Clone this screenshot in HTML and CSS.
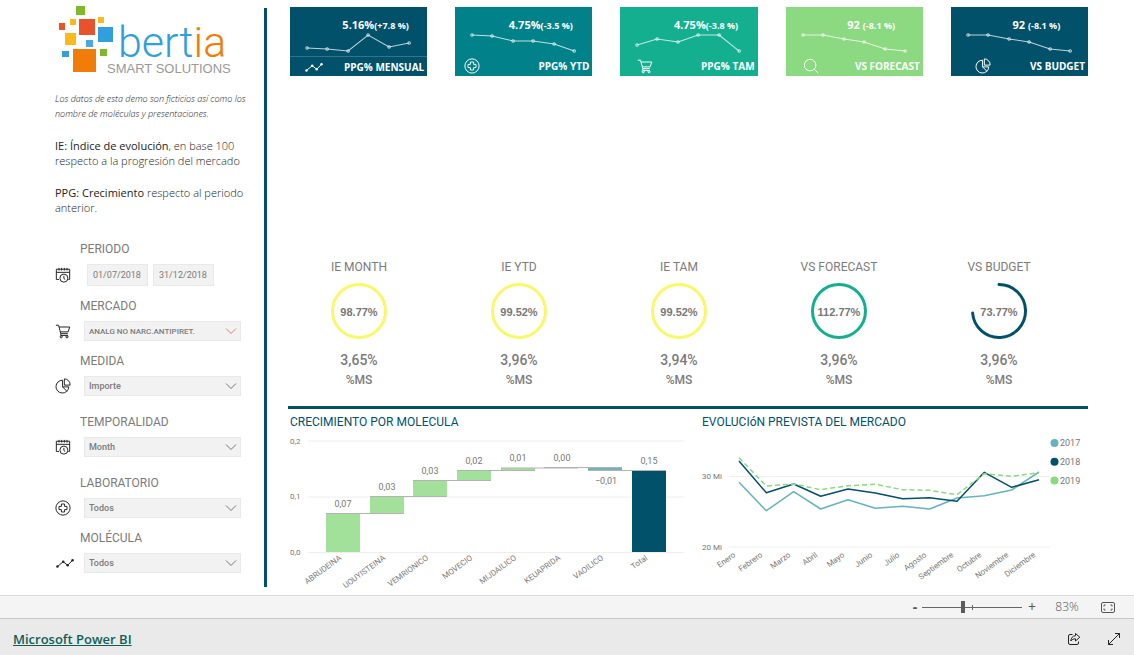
FILE: index.html
```html
<!DOCTYPE html>
<html lang="es">
<head>
<meta charset="utf-8">
<meta name="viewport" content="width=device-width, initial-scale=1">
<title>Bertia Smart Solutions</title>
<link rel="stylesheet" href="styles.css">
</head>
<body>
<svg class="sprite" aria-hidden="true">
  <symbol id="calendar" viewBox="0 0 18 18"><path d="M4.500 14H1.500V2.500h15V14H15M1.500 6h15M4.500 1v3M7.500 1v3M10.500 1v3M13.500 1v3"/><circle cx="10" cy="12.500" r="4.500"/><path d="M10 10v3l1.500 1"/></symbol>
  <symbol id="cart" viewBox="0 0 18 18"><path d="M1 2.500h3l2.500 9.500h8M4.600 4.500h12L14.800 10H6M6.500 12v2h8"/><circle cx="7" cy="15.500" r="1.200"/><circle cx="13.500" cy="15.500" r="1.200"/></symbol>
  <symbol id="pie" viewBox="0 0 18 18"><path d="M8.500 2.500A7.200 7.200 0 1 0 15.500 10H8.500z"/><path d="M10.500 1v7H17a6.500 6.500 0 0 0-6.500-7z"/><path d="M8.500 10l5 5"/></symbol>
  <symbol id="cross" viewBox="0 0 18 18"><circle cx="9" cy="9" r="8"/><path d="M7.200 4.500h3.600v2.700h2.700v3.600h-2.700v2.700H7.200v-2.700H4.500V7.200h2.700z"/></symbol>
  <symbol id="trend" viewBox="0 0 20 18"><path d="M1.500 13L8 7.500l5 4L18.500 6"/><g class="dots"><circle cx="1.500" cy="13" r="1.400"/><circle cx="8" cy="7.500" r="1.400"/><circle cx="13" cy="11.500" r="1.400"/><circle cx="18.500" cy="6" r="1.400"/></g></symbol>
  <symbol id="search" viewBox="0 0 18 18"><circle cx="8" cy="8" r="6.500"/><path d="M12.800 12.800l4.200 4.200"/></symbol>
  <symbol id="chevron" viewBox="0 0 12 8"><path d="M1 1.500l5 5 5-5"/></symbol>
</svg>

<main class="report">
  <aside class="sidebar">
    <svg class="logo" viewBox="0 0 185 72" role="img" aria-label="bertia smart solutions">
      <rect x="21" y="2" width="9" height="9" fill="#80b928"/>
      <rect x="4" y="19" width="6" height="7" fill="#e8532b"/>
      <rect x="15" y="15" width="6" height="6" fill="#fbb91b"/>
      <rect x="24" y="15" width="16" height="16" fill="#e8532b"/>
      <rect x="43" y="13" width="6" height="6" fill="#fbb91b"/>
      <rect x="43" y="23" width="15" height="15" fill="#309fdb"/>
      <rect x="10" y="29" width="11" height="12" fill="#fbb91b"/>
      <rect x="31" y="36" width="7" height="7" fill="#45a9e2"/>
      <rect x="7" y="47" width="7" height="6" fill="#309fdb"/>
      <rect x="45" y="45" width="7" height="7" fill="#80b928"/>
      <rect x="18" y="45" width="23" height="23" fill="#f07d0a"/>
      <text class="logo-name" x="63" y="53">bert<tspan fill="#f07d0a">ia</tspan></text>
      <text class="logo-tag" x="52" y="69">SMART SOLUTIONS</text>
    </svg>
    <p class="note">Los datos de esta demo son ficticios así como los nombre de moléculas y presentaciones.</p>
    <p class="about"><b>IE: Índice de evolución</b>, en base 100 respecto a la progresión del mercado</p>
    <p class="about"><b>PPG: Crecimiento</b> respecto al periodo anterior.</p>

    <form class="filters">
      <fieldset class="filter">
        <legend class="filter-name">PERIODO</legend>
        <div class="filter-row">
          <svg class="icon"><use href="#calendar"/></svg>
          <div class="dates">
            <input type="text" value="01/07/2018" aria-label="Desde">
            <input type="text" value="31/12/2018" aria-label="Hasta">
          </div>
        </div>
      </fieldset>
      <div class="filter">
        <label class="filter-name" for="mercado">MERCADO</label>
        <div class="filter-row">
          <svg class="icon"><use href="#cart"/></svg>
          <div class="drop drop-active"><select class="small" id="mercado"><option>ANALG NO NARC.ANTIPIRET.</option></select><svg class="chevron"><use href="#chevron"/></svg></div>
        </div>
      </div>
      <div class="filter">
        <label class="filter-name" for="medida">MEDIDA</label>
        <div class="filter-row">
          <svg class="icon"><use href="#pie"/></svg>
          <div class="drop"><select id="medida"><option>Importe</option></select><svg class="chevron"><use href="#chevron"/></svg></div>
        </div>
      </div>
      <div class="filter filter-apart">
        <label class="filter-name" for="temporalidad">TEMPORALIDAD</label>
        <div class="filter-row">
          <svg class="icon"><use href="#calendar"/></svg>
          <div class="drop"><select id="temporalidad"><option>Month</option></select><svg class="chevron"><use href="#chevron"/></svg></div>
        </div>
      </div>
      <div class="filter filter-apart">
        <label class="filter-name" for="laboratorio">LABORATORIO</label>
        <div class="filter-row">
          <svg class="icon"><use href="#cross"/></svg>
          <div class="drop"><select id="laboratorio"><option>Todos</option></select><svg class="chevron"><use href="#chevron"/></svg></div>
        </div>
      </div>
      <div class="filter">
        <label class="filter-name" for="molecula">MOLÉCULA</label>
        <div class="filter-row">
          <svg class="icon icon-wide"><use href="#trend"/></svg>
          <div class="drop"><select id="molecula"><option>Todos</option></select><svg class="chevron"><use href="#chevron"/></svg></div>
        </div>
      </div>
    </form>
  </aside>

  <div class="content">
    <section class="kpis">
      <article class="kpi navy">
        <p class="kpi-value">5.16%<small>(+7.8 %)</small></p>
        <svg class="spark" viewBox="0 0 137 22"><path d="M17 14L37 15 58 17 78 1 99 13 119 9"/><g><circle cx="17" cy="14" r="1.300"/><circle cx="37" cy="15" r="1.300"/><circle cx="58" cy="17" r="1.300"/><circle cx="78" cy="1" r="1.300"/><circle cx="99" cy="13" r="1.300"/><circle cx="119" cy="9" r="1.300"/></g></svg>
        <div class="kpi-foot ruled"><svg class="icon icon-wide"><use href="#trend"/></svg><h2>PPG% MENSUAL</h2></div>
      </article>
      <article class="kpi teal">
        <p class="kpi-value">4.75%<small>(-3.5 %)</small></p>
        <svg class="spark" viewBox="0 0 137 22"><path d="M17 1L37 2 58 7 78 7 99 10 119 17"/><g><circle cx="17" cy="1" r="1.300"/><circle cx="37" cy="2" r="1.300"/><circle cx="58" cy="7" r="1.300"/><circle cx="78" cy="7" r="1.300"/><circle cx="99" cy="10" r="1.300"/><circle cx="119" cy="17" r="1.300"/></g></svg>
        <div class="kpi-foot near"><svg class="icon"><use href="#cross"/></svg><h2>PPG% YTD</h2></div>
      </article>
      <article class="kpi green">
        <p class="kpi-value">4.75%<small>(-3.8 %)</small></p>
        <svg class="spark" viewBox="0 0 137 22"><path d="M17 11L37 5 58 8 78 1 99 1 119 17"/><g><circle cx="17" cy="11" r="1.300"/><circle cx="37" cy="5" r="1.300"/><circle cx="58" cy="8" r="1.300"/><circle cx="78" cy="1" r="1.300"/><circle cx="99" cy="1" r="1.300"/><circle cx="119" cy="17" r="1.300"/></g></svg>
        <div class="kpi-foot"><svg class="icon"><use href="#cart"/></svg><h2>PPG% TAM</h2></div>
      </article>
      <article class="kpi lime">
        <p class="kpi-value">92 <small>(-8.1 %)</small></p>
        <svg class="spark" viewBox="0 0 137 22"><path d="M17 1L37 1 58 5 78 8 99 15 119 17"/><g><circle cx="17" cy="1" r="1.300"/><circle cx="37" cy="1" r="1.300"/><circle cx="58" cy="5" r="1.300"/><circle cx="78" cy="8" r="1.300"/><circle cx="99" cy="15" r="1.300"/><circle cx="119" cy="17" r="1.300"/></g></svg>
        <div class="kpi-foot"><svg class="icon"><use href="#search"/></svg><h2>VS FORECAST</h2></div>
      </article>
      <article class="kpi navy">
        <p class="kpi-value">92 <small>(-8.1 %)</small></p>
        <svg class="spark" viewBox="0 0 137 22"><path d="M17 1L37 1 58 5 78 8 99 15 119 17"/><g><circle cx="17" cy="1" r="1.300"/><circle cx="37" cy="1" r="1.300"/><circle cx="58" cy="5" r="1.300"/><circle cx="78" cy="8" r="1.300"/><circle cx="99" cy="15" r="1.300"/><circle cx="119" cy="17" r="1.300"/></g></svg>
        <div class="kpi-foot far"><svg class="icon"><use href="#pie"/></svg><h2>VS BUDGET</h2></div>
      </article>
    </section>

    <section class="gauges">
      <article class="gauge"><h2>IE MONTH</h2><svg viewBox="0 0 56 56"><circle class="ring yellow" cx="28" cy="28" r="26.500"/><text x="28" y="33">98.77%</text></svg><p class="share">3,65%</p><p>%MS</p></article>
      <article class="gauge"><h2>IE YTD</h2><svg viewBox="0 0 56 56"><circle class="ring yellow" cx="28" cy="28" r="26.500"/><text x="28" y="33">99.52%</text></svg><p class="share">3,96%</p><p>%MS</p></article>
      <article class="gauge"><h2>IE TAM</h2><svg viewBox="0 0 56 56"><circle class="ring yellow" cx="28" cy="28" r="26.500"/><text x="28" y="33">99.52%</text></svg><p class="share">3,94%</p><p>%MS</p></article>
      <article class="gauge"><h2>VS FORECAST</h2><svg viewBox="0 0 56 56"><circle class="ring jade" cx="28" cy="28" r="26.500"/><text x="28" y="33">112.77%</text></svg><p class="share">3,96%</p><p>%MS</p></article>
      <article class="gauge"><h2>VS BUDGET</h2><svg viewBox="0 0 56 56"><path class="ring blue" d="M28 1.500A26.500 26.500 0 1 1 1.600 30"/><text x="28" y="33">73.77%</text></svg><p class="share">3,96%</p><p>%MS</p></article>
    </section>

    <section class="charts">
      <figure class="chart">
        <figcaption>CRECIMIENTO POR MOLECULA</figcaption>
        <svg viewBox="0 0 412 160">
          <path class="grid" d="M20 9H396M20 65H396M20 120.500H396"/>
          <g class="axis"><text x="2" y="12">0,2</text><text x="2" y="67">0,1</text><text x="2" y="123">0,0</text></g>
          <g fill="#a1e199">
            <rect x="38" y="81" width="34" height="39"/><rect x="82" y="64" width="34" height="17"/><rect x="125" y="49" width="34" height="15"/><rect x="169" y="38" width="34" height="11"/><rect x="213" y="36" width="34" height="3"/>
          </g>
          <rect x="300" y="35" width="34" height="3" fill="#6cb3bc"/>
          <rect x="344" y="38" width="34" height="82" fill="#01516a"/>
          <path class="link" d="M38 81.500H116M82 64.500H159M125 48.500H203M169 38.500H247M213 36H290M256 35.500H334M300 38.500H378"/>
          <g class="values"><text x="55" y="75">0,07</text><text x="99" y="58">0,03</text><text x="142" y="42">0,03</text><text x="186" y="32">0,02</text><text x="230" y="29">0,01</text><text x="274" y="29">0,00</text><text x="318" y="52">−0,01</text><text x="361" y="32">0,15</text></g>
          <g class="ticks">
            <text transform="translate(54 127) rotate(-36)">ABRUDEINA</text>
            <text transform="translate(98 127) rotate(-36)">UOUYISTEINA</text>
            <text transform="translate(141 127) rotate(-36)">VEMRIONICO</text>
            <text transform="translate(185 127) rotate(-36)">MOVECIO</text>
            <text transform="translate(229 127) rotate(-36)">MIJDAILICO</text>
            <text transform="translate(273 127) rotate(-36)">KEUAPRIDA</text>
            <text transform="translate(316 127) rotate(-36)">VAOILICO</text>
            <text transform="translate(360 127) rotate(-36)">Total</text>
          </g>
        </svg>
      </figure>
      <figure class="chart">
        <figcaption>EVOLUCIóN PREVISTA DEL MERCADO</figcaption>
        <svg viewBox="0 0 388 160">
          <path class="grid" d="M29 44.500H350M29 115H350"/>
          <g class="axis"><text x="2" y="47">30 Mi</text><text x="2" y="118">20 Mi</text></g>
          <path class="line" stroke="#66b3bd" d="M39 50.300L66.300 78.700 93.700 59.700 120.700 77 148 67.700 175.300 76.300 202.700 74.300 229.700 77 257 66 284.300 63.700 311.700 58 339 40"/>
          <path class="line" stroke="#01516a" d="M39 29L66.300 60.700 93.700 52 120.700 64.300 148 57 175.300 61 202.700 66.700 229.700 65.700 257 69.300 284.300 40.300 311.700 55.300 339 47.700"/>
          <path class="line dashed" stroke="#8bd981" d="M39 25.700L66.300 54 93.700 52 120.700 57.700 148 53.700 175.300 52.300 202.700 57.700 229.700 58.300 257 62.700 284.300 41.700 311.700 44.300 339 40.700"/>
          <g class="ticks months">
            <text transform="translate(36 124) rotate(-36)">Enero</text>
            <text transform="translate(63 124) rotate(-36)">Febrero</text>
            <text transform="translate(91 124) rotate(-36)">Marzo</text>
            <text transform="translate(118 124) rotate(-36)">Abril</text>
            <text transform="translate(145 124) rotate(-36)">Mayo</text>
            <text transform="translate(173 124) rotate(-36)">Junio</text>
            <text transform="translate(200 124) rotate(-36)">Julio</text>
            <text transform="translate(227 124) rotate(-36)">Agosto</text>
            <text transform="translate(254 124) rotate(-36)">Septiembre</text>
            <text transform="translate(282 124) rotate(-36)">Octubre</text>
            <text transform="translate(309 124) rotate(-36)">Noviembre</text>
            <text transform="translate(336 124) rotate(-36)">Diciembre</text>
          </g>
          <circle cx="354.500" cy="11" r="4" fill="#66b3bd"/><circle cx="354.500" cy="29.700" r="4" fill="#01516a"/><circle cx="354.500" cy="48.500" r="4" fill="#8bd981"/>
          <g class="legend"><text x="360" y="14">2017</text><text x="360" y="33">2018</text><text x="360" y="52">2019</text></g>
        </svg>
      </figure>
    </section>
  </div>
</main>

<div class="zoombar">
  <button type="button" class="step" aria-label="Alejar">-</button>
  <input type="range" min="0" max="100" value="41" aria-label="Zoom">
  <button type="button" class="step" aria-label="Acercar">+</button>
  <output class="percent">83%</output>
  <button type="button" class="tool" aria-label="Ajustar a la página"><svg width="14" height="11" viewBox="0 0 14 11"><rect x=".5" y=".5" width="13" height="10" rx="1.500"/><path d="M3 4.500V3h1.500M9.500 3H11v1.500M11 6.500V8H9.500M4.500 8H3V6.500"/></svg></button>
</div>
<footer class="footer">
  <a href="#">Microsoft Power BI</a>
  <div class="tools">
    <button type="button" class="tool dark" aria-label="Compartir"><svg width="14" height="14" viewBox="0 0 14 14"><path d="M5.500 2.500H3A1.500 1.500 0 0 0 1.500 4v7A1.500 1.500 0 0 0 3 12.500h7a1.500 1.500 0 0 0 1.500-1.500V9.500"/><path d="M8.500 1.500L12.800 5.200 8.500 9V6.800C6.500 6.800 5 7.500 3.800 9 4 6 5.500 4 8.500 3.700z"/></svg></button>
    <button type="button" class="tool dark" aria-label="Pantalla completa"><svg width="14" height="14" viewBox="0 0 14 14"><path d="M1.500 12.500l11-11M8 1.500h4.500V6M1.500 8v4.500H6"/></svg></button>
  </div>
</footer>
</body>
</html>
```
FILE: styles.css
```css
* { box-sizing: border-box; }

body {
  margin: 0;
  min-height: 100vh;
  display: flex;
  flex-direction: column;
  background: #fff;
  color: #7b7b7b;
  font: 12px/16px Roboto, "Liberation Sans", sans-serif;
}

h2, p, figure, fieldset, legend { margin: 0; padding: 0; border: 0; }
h2 { font-size: 12px; font-weight: 400; }
svg { display: block; }
button { border: 0; padding: 0; background: none; font: inherit; color: inherit; }
.sprite { display: none; }

.icon { width: 16px; height: 16px; fill: none; stroke: currentColor; stroke-width: 1.1; flex: none; }
.icon-wide { width: 20px; }
.dots { fill: currentColor; stroke: none; }

.report { flex: 1; display: flex; }

/* Sidebar */
.sidebar {
  width: 267px;
  flex: none;
  margin: 8px 0;
  padding: 0 10px 0 55px;
  border-right: 3px solid #01516a;
  color: #222;
}
.logo { width: 185px; height: 72px; margin-top: -4px; overflow: visible; }
.logo-name { font: 300 43px Roboto, sans-serif; fill: #309fdb; }
.logo-tag { font: 13px "Liberation Sans", sans-serif; fill: #999; }
.note { margin-top: 15px; font: italic 300 9px/15px "Open Sans", sans-serif; }
.about { margin-top: 17px; font: 300 11px/15px "Open Sans", sans-serif; }
.about b { font-weight: 400; }

.filters { margin-top: 26px; color: #7b7b7b; }
.filter { margin-top: 12px; }
.filter-apart { margin-top: 18px; }
.filter-name { display: block; margin-left: 25px; line-height: 16px; }
.filter-row { display: grid; grid-template-columns: 29px 157px; align-items: center; margin-top: 7px; }
.filter-row .icon { color: #222; }
.dates { display: flex; gap: 5px; padding-left: 3px; }
.dates input {
  width: 61px;
  height: 22px;
  padding: 0 5px;
  border: 1px solid #e9e9e9;
  background: #f2f2f2;
  color: inherit;
  font: 9px Roboto, sans-serif;
}
.drop { display: grid; align-items: center; }
.drop > * { grid-area: 1 / 1; }
.drop select {
  appearance: none;
  width: 100%;
  height: 20px;
  padding: 0 4px;
  border: 1px solid #e9e9e9;
  border-radius: 0;
  background: #f2f2f2;
  color: inherit;
  font: 500 9px Roboto, sans-serif;
}
.drop .small { font-size: 8px; }
.chevron { width: 12px; height: 8px; justify-self: end; margin-right: 4px; fill: none; stroke: #777; pointer-events: none; }
.drop-active .chevron { stroke: #c98d6c; }

/* Main area */
.content { flex: 1; display: flex; flex-direction: column; min-width: 0; padding: 7px 46px 3px 12px; }

.kpis { display: grid; grid-template-columns: repeat(5, 1fr); gap: 28px; padding-left: 11px; }
.kpi { padding-top: 10px; color: #fff; font-family: "Open Sans", sans-serif; }
.navy { background: #01516a; }
.teal { background: #01828a; }
.green { background: #13af8f; }
.lime { background: #8bd981; }
.kpi-value { padding-left: 34px; text-align: center; font-size: 11px; font-weight: 700; }
.kpi-value small { font-size: 9px; }
.spark { width: 100%; overflow: visible; fill: none; stroke: #fff; stroke-opacity: .75; }
.spark g { fill: inherit; }
.kpi-foot { display: flex; justify-content: space-between; align-items: center; height: 20px; padding: 0 3px 0 17px; }
.kpi-foot.near { padding-left: 9px; }
.kpi-foot.far { padding-left: 24px; }
.kpi-foot.ruled { padding-left: 14px; border-top: 1px solid #33748a; }
.kpi-foot h2 { font-size: 10px; font-weight: 700; white-space: nowrap; }

.gauges { display: grid; grid-template-columns: repeat(5, 1fr); margin-top: auto; padding-right: 9px; }
.gauge { text-align: center; font-weight: 500; }
.gauge h2 { font-weight: 400; }
.gauge svg { width: 56px; height: 56px; margin: 8px auto 12px; overflow: visible; }
.gauge text { font: 700 11px "Liberation Sans", sans-serif; fill: #777; text-anchor: middle; }
.share { margin-bottom: 3px; font-size: 14px; line-height: 18px; }
.ring { fill: none; stroke-width: 3; stroke-linecap: round; }
.yellow { stroke: #f9f868; }
.jade { stroke: #13af8f; }
.blue { stroke: #01516a; }

.charts {
  display: grid;
  grid-template-columns: 412fr 388fr;
  margin: 18px 0 0 9px;
  padding-top: 5px;
  border-top: 3px solid #01516a;
}
.chart figcaption { padding: 0 2px; margin-bottom: 2px; color: #01516a; }
.chart svg { width: 100%; }
.grid { fill: none; stroke: #eee; }
.axis { font-size: 8px; fill: #777; }
.link { fill: none; stroke: #b3b3b3; }
.values { font-size: 9px; fill: #777; text-anchor: middle; }
.ticks { font-size: 8px; fill: #777; text-anchor: end; }
.line { fill: none; stroke-width: 1.5; stroke-linejoin: round; }
.dashed { stroke-dasharray: 5 3; }
.legend { font-size: 9px; fill: #777; }

/* Bottom bars */
.zoombar {
  display: flex;
  align-items: center;
  justify-content: flex-end;
  height: 23px;
  padding-right: 19px;
  border-top: 1px solid #dcdcdc;
  background: #f4f4f4;
  color: #555;
  font-family: "Open Sans", sans-serif;
}
.step { width: 20px; font-size: 14px; }
.step:first-child { width: 14px; font-weight: 700; }
.zoombar input {
  appearance: none;
  width: 100px;
  height: 12px;
  margin: 0;
  background:
    linear-gradient(#666, #666) center / 1px 5px no-repeat,
    linear-gradient(#666, #666) center / 100% 1px no-repeat;
}
.zoombar input::-webkit-slider-thumb { appearance: none; width: 4px; height: 12px; background: #5c5c5c; }
.percent { width: 50px; text-align: center; font-weight: 300; }
.tool { margin-left: 9px; }
.tool svg { fill: none; stroke: #555; }
.tool.dark svg { stroke: #222; }
.footer {
  display: flex;
  align-items: center;
  justify-content: space-between;
  height: 37px;
  padding: 4px 13px 0;
  border-top: 1px solid #c6c6c6;
  background: #eaeaea;
}
.footer a { color: #0f5f59; font: 600 13px "Open Sans", sans-serif; }
.tools { display: flex; gap: 17px; }
```
